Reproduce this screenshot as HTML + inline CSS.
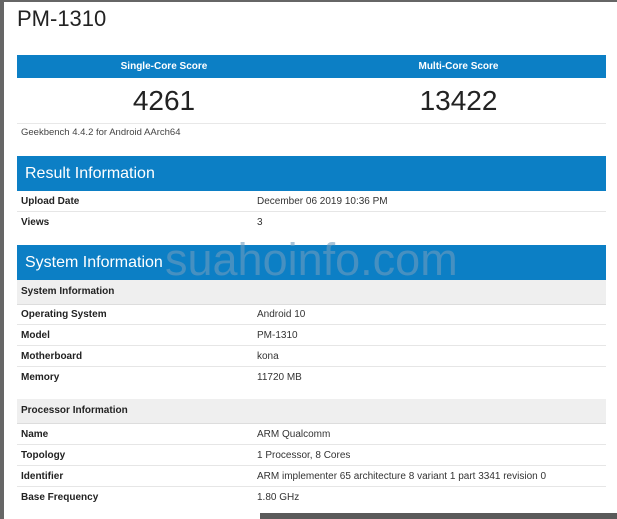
<!DOCTYPE html><html><head><style>
body{margin:0;width:617px;height:519px;background:#fff;font-family:"Liberation Sans",sans-serif;position:relative;overflow:hidden;color:#222}
.a{position:absolute}
.bar{position:absolute;left:17px;width:589px;background:#0c7fc5;color:#fff}
.row{position:absolute;left:17px;width:589px;height:20px;border-bottom:1px solid #e6e6e6;font-size:10px;line-height:22px}
.row b{position:absolute;left:4px}
.row span{position:absolute;left:240px;color:#333}
.sub{position:absolute;left:17px;width:589px;background:#efefef;font-size:10px;font-weight:bold;border-bottom:1px solid #ddd}
</style></head><body>
<div class="a" style="left:0;top:0;width:617px;height:2px;background:#666"></div>
<div class="a" style="left:0;top:0;width:4px;height:519px;background:#666"></div>
<div class="a" style="left:260px;top:513px;width:357px;height:6px;background:#5a5a5a"></div>
<div class="a" style="left:17px;top:6px;font-size:22px;color:#222">PM-1310</div>
<div class="bar" style="top:55px;height:23px;font-size:10px;font-weight:bold;line-height:24px">
<span class="a" style="left:0;width:294px;text-align:center">Single-Core Score</span>
<span class="a" style="left:294px;width:295px;text-align:center">Multi-Core Score</span></div>
<div class="a" style="left:17px;width:294px;top:85px;text-align:center;font-size:28px">4261</div>
<div class="a" style="left:311px;width:295px;top:85px;text-align:center;font-size:28px">13422</div>
<div class="a" style="left:17px;top:123px;width:589px;height:1px;background:#e8e8e8"></div>
<div class="a" style="left:21px;top:127px;font-size:9.5px;color:#444">Geekbench 4.4.2 for Android AArch64</div>
<div class="bar" style="top:156px;height:35px;font-size:16px;line-height:35px"><span style="margin-left:8px">Result Information</span></div>
<div class="row" style="top:191px"><b>Upload Date</b><span>December 06 2019 10:36 PM</span></div>
<div class="row" style="top:212px;border:none"><b>Views</b><span>3</span></div>
<div class="bar" style="top:245px;height:35px;font-size:16px;line-height:35px"><span style="margin-left:8px">System Information</span><span class="a" style="left:148px;top:-10px;font-size:45px;line-height:50px;color:rgba(110,155,190,.6)">suahoinfo.com</span></div>
<div class="sub" style="top:280px;height:24px;line-height:24px"><span style="margin-left:4px">System Information</span></div>
<div class="row" style="top:304px"><b>Operating System</b><span>Android 10</span></div>
<div class="row" style="top:325px"><b>Model</b><span>PM-1310</span></div>
<div class="row" style="top:346px"><b>Motherboard</b><span>kona</span></div>
<div class="row" style="top:367px;border:none"><b>Memory</b><span>11720 MB</span></div>
<div class="sub" style="top:399px;height:24px;line-height:24px"><span style="margin-left:4px">Processor Information</span></div>
<div class="row" style="top:424px"><b>Name</b><span>ARM Qualcomm</span></div>
<div class="row" style="top:445px"><b>Topology</b><span>1 Processor, 8 Cores</span></div>
<div class="row" style="top:466px"><b>Identifier</b><span>ARM implementer 65 architecture 8 variant 1 part 3341 revision 0</span></div>
<div class="row" style="top:487px;border:none"><b>Base Frequency</b><span>1.80 GHz</span></div>
</body></html>
